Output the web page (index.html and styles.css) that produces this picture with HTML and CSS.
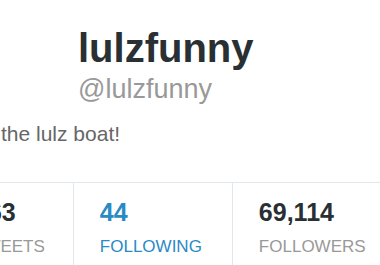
FILE: index.html
```html
<!DOCTYPE html>
<html lang="en">
	<head>
		<meta charset="UTF-8" />
		<meta name="viewport" content="width=device-width, initial-scale=1.0" />
		<title>lulzfunny</title>
		<link rel="stylesheet" href="styles.css">
	</head>
	<body>
		<div class="profile">
			<div class="profile-names">
				<h1 class="profile-name">lulzfunny</h1>
				<div class="profile-handle">@lulzfunny</div>
			</div>
			<p class="profile-bio">the lulz boat!</p>
			<ul class="profile-stats">
				<li class="stat">
					<span class="stat-value">263</span>
					<span class="stat-label">Tweets</span>
				</li>
				<li class="stat active">
					<span class="stat-value">44</span>
					<span class="stat-label">Following</span>
				</li>
				<li class="stat">
					<span class="stat-value">69,114</span>
					<span class="stat-label">Followers</span>
				</li>
			</ul>
		</div>
	</body>
</html>
```

FILE: styles.css
```css
html,
body {
	margin: 0;
	height: 100%;
	overflow: hidden;
	background-color: #fff;
}
body {
	font-family: "Liberation Sans", Arial, sans-serif;
	color: #333;
}
.profile {
	display: flex;
	flex-direction: column;
	height: 100%;
}
.profile-names {
	padding: 28px 0 0 78px;
}
.profile-name {
	margin: 0;
	font-size: 40px;
	line-height: 40px;
	font-weight: bold;
	color: #292f33;
}
.profile-handle {
	margin-top: 8px;
	font-size: 27px;
	line-height: 27px;
	color: #999;
}
.profile-bio {
	margin: 20px 0 0 1px;
	font-size: 21px;
	line-height: 21px;
	color: #666;
}
.profile-stats {
	display: flex;
	flex: 1;
	margin: 38px 0 0 -52px;
	padding: 0;
	list-style: none;
	border-top: 1px solid #e1e8ed;
}
.stat {
	display: flex;
	flex-direction: column;
	padding: 17px 30px 0 26px;
	border-left: 1px solid #e1e8ed;
	white-space: nowrap;
}
.stat:first-child {
	border-left: none;
	padding-right: 28px;
}
.stat-value {
	font-size: 25px;
	line-height: 24px;
	font-weight: bold;
	color: #292f33;
}
.stat-label {
	margin-top: 14px;
	font-size: 17px;
	line-height: 17px;
	text-transform: uppercase;
	color: #999;
}
.stat.active .stat-value,
.stat.active .stat-label {
	color: #2a8ac4;
}
```
